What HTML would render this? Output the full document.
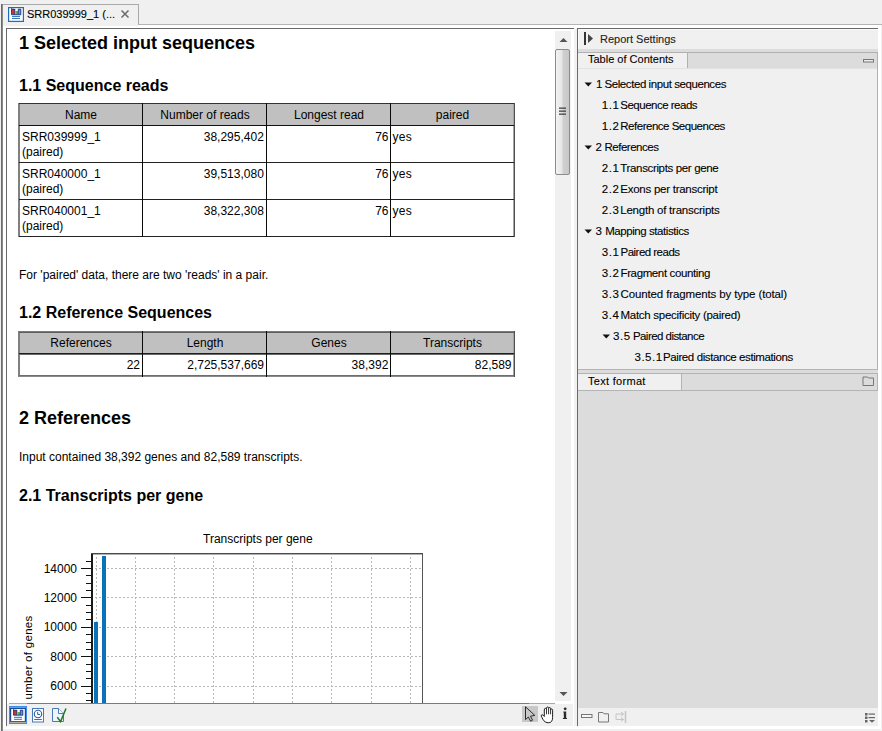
<!DOCTYPE html>
<html><head><meta charset="utf-8"><title>Report</title>
<style>
html,body{margin:0;padding:0;}
body{width:882px;height:731px;position:relative;overflow:hidden;background:#f0f0f0;font-family:"Liberation Sans",sans-serif;}
body>div{position:absolute;box-sizing:content-box;}
.t{white-space:nowrap;}
</style></head><body>
<div style="left:0px;top:0px;width:882px;height:731px;background:#f0f0f0;"></div>
<div style="left:3px;top:25px;width:878px;height:704px;background:#ffffff;"></div>
<div style="left:881px;top:25px;width:1px;height:704px;background:#f0f0f0;"></div>
<div style="left:138px;top:24px;width:744px;height:1px;background:#b4b4b4;"></div>
<div style="left:2px;top:4px;width:137px;height:1px;background:#a9a9a9;"></div>
<div style="left:138px;top:4px;width:1px;height:21px;background:#a9a9a9;"></div>
<div style="left:3px;top:5px;width:135px;height:21px;background:#f0f0f0;"></div>
<div style="left:1px;top:4px;width:1px;height:727px;background:#6b6b6b;"></div>
<div style="left:2px;top:4px;width:1px;height:727px;background:#8a8a8a;"></div>
<svg style="position:absolute;left:8px;top:7px;" width="16" height="15" viewBox="0 0 16 15">
<rect x="0.6" y="0.6" width="14.8" height="13.8" fill="#fff" stroke="#1f6db8" stroke-width="1.2"/>
<rect x="4" y="2" width="2.8" height="5.5" fill="#c8342e"/>
<rect x="7.6" y="4" width="2.4" height="3.5" fill="#52b84a"/>
<rect x="10.4" y="2" width="2.4" height="5.5" fill="#5a9ae0"/>
<path d="M3.5 1.2 L3.5 7.7 L13.2 7.7 M4 2.2 L6.8 2.2 M10.4 2.2 L12.8 2.2 L12.8 7.5 M6.8 2 L6.8 7.5 M10.3 2 L10.3 7.5" stroke="#1b2f7a" stroke-width="0.9" fill="none"/>
<rect x="4" y="8.9" width="8" height="1" fill="#2a6fc0"/>
<rect x="4" y="10.9" width="8" height="1" fill="#2a6fc0"/>
</svg>
<div class="t" style="left:27px;top:8.69px;font-size:11px;line-height:11px;color:#000;-webkit-text-stroke:0.1px #000;">SRR039999_1 (...</div>
<svg style="position:absolute;left:120px;top:9px;" width="10" height="10" viewBox="0 0 10 10"><path d="M1.5 1.5 L8.5 8.5 M8.5 1.5 L1.5 8.5" stroke="#6a6a6a" stroke-width="1.5"/></svg>
<div style="left:6px;top:28px;width:568px;height:1px;background:#6a6a6a;"></div>
<div style="left:6px;top:28px;width:1px;height:698px;background:#6a6a6a;"></div>
<div style="left:7px;top:29px;width:567px;height:697px;background:#ffffff;"></div>
<div class="t" style="left:19px;top:33.76px;font-size:18px;line-height:18px;font-weight:bold;color:#000;">1 Selected input sequences</div>
<div class="t" style="left:19px;top:77.96px;font-size:16px;line-height:16px;font-weight:bold;color:#000;">1.1 Sequence reads</div>
<div style="left:18px;top:104px;width:496px;height:21px;background:#c0c0c0;"></div>
<div style="left:19px;top:103px;width:1px;height:134px;background:#808080;"></div>
<div style="left:513px;top:104px;width:1px;height:132px;background:#a4a4a4;"></div>
<div style="left:18px;top:103px;width:497px;height:1px;background:#333;"></div>
<div style="left:18px;top:125px;width:497px;height:1px;background:#111;"></div>
<div style="left:18px;top:162px;width:497px;height:1px;background:#222;"></div>
<div style="left:18px;top:199px;width:497px;height:1px;background:#222;"></div>
<div style="left:18px;top:236px;width:497px;height:1px;background:#222;"></div>
<div style="left:18px;top:103px;width:1px;height:134px;background:#808080;"></div>
<div style="left:514px;top:103px;width:1px;height:134px;background:#505050;"></div>
<div style="left:142px;top:103px;width:1px;height:134px;background:#0a0a0a;"></div>
<div style="left:266px;top:103px;width:1px;height:134px;background:#0a0a0a;"></div>
<div style="left:390px;top:103px;width:1px;height:134px;background:#0a0a0a;"></div>
<div class="t" style="left:-119px;width:400px;text-align:center;top:108.84px;font-size:12px;line-height:12px;color:#000;">Name</div>
<div class="t" style="left:5px;width:400px;text-align:center;top:108.84px;font-size:12px;line-height:12px;color:#000;">Number of reads</div>
<div class="t" style="left:129px;width:400px;text-align:center;top:108.84px;font-size:12px;line-height:12px;color:#000;">Longest read</div>
<div class="t" style="left:252.5px;width:400px;text-align:center;top:108.84px;font-size:12px;line-height:12px;color:#000;">paired</div>
<div class="t" style="left:22px;top:130.84px;font-size:12px;line-height:12px;color:#000;">SRR039999_1</div>
<div class="t" style="left:22px;top:145.84px;font-size:12px;line-height:12px;color:#000;">(paired)</div>
<div class="t" style="right:618.2px;top:130.84px;font-size:12px;line-height:12px;color:#000;">38,295,402</div>
<div class="t" style="right:493.5px;top:130.84px;font-size:12px;line-height:12px;color:#000;">76</div>
<div class="t" style="left:392.5px;top:130.84px;font-size:12px;line-height:12px;color:#000;letter-spacing:0.3px;">yes</div>
<div class="t" style="left:22px;top:167.84px;font-size:12px;line-height:12px;color:#000;">SRR040000_1</div>
<div class="t" style="left:22px;top:182.84px;font-size:12px;line-height:12px;color:#000;">(paired)</div>
<div class="t" style="right:618.2px;top:167.84px;font-size:12px;line-height:12px;color:#000;">39,513,080</div>
<div class="t" style="right:493.5px;top:167.84px;font-size:12px;line-height:12px;color:#000;">76</div>
<div class="t" style="left:392.5px;top:167.84px;font-size:12px;line-height:12px;color:#000;letter-spacing:0.3px;">yes</div>
<div class="t" style="left:22px;top:204.84px;font-size:12px;line-height:12px;color:#000;">SRR040001_1</div>
<div class="t" style="left:22px;top:219.84px;font-size:12px;line-height:12px;color:#000;">(paired)</div>
<div class="t" style="right:618.2px;top:204.84px;font-size:12px;line-height:12px;color:#000;">38,322,308</div>
<div class="t" style="right:493.5px;top:204.84px;font-size:12px;line-height:12px;color:#000;">76</div>
<div class="t" style="left:392.5px;top:204.84px;font-size:12px;line-height:12px;color:#000;letter-spacing:0.3px;">yes</div>
<div class="t" style="left:19px;top:268.64px;font-size:12px;line-height:12px;color:#000;">For 'paired' data, there are two 'reads' in a pair.</div>
<div class="t" style="left:19px;top:304.96px;font-size:16px;line-height:16px;font-weight:bold;color:#000;">1.2 Reference Sequences</div>
<div style="left:18px;top:332px;width:496px;height:21px;background:#c0c0c0;"></div>
<div style="left:19px;top:331px;width:1px;height:46px;background:#808080;"></div>
<div style="left:513px;top:332px;width:1px;height:44px;background:#a4a4a4;"></div>
<div style="left:18px;top:331px;width:497px;height:1px;background:#7a7a7a;"></div>
<div style="left:18px;top:332px;width:497px;height:1px;background:#5e5e5e;"></div>
<div style="left:18px;top:353px;width:497px;height:1px;background:#1e1e1e;"></div>
<div style="left:18px;top:354px;width:497px;height:1px;background:#6a6a6a;"></div>
<div style="left:18px;top:375px;width:497px;height:1px;background:#6e6e6e;"></div>
<div style="left:18px;top:376px;width:497px;height:1px;background:#8a8a8a;"></div>
<div style="left:18px;top:331px;width:1px;height:46px;background:#808080;"></div>
<div style="left:514px;top:331px;width:1px;height:46px;background:#505050;"></div>
<div style="left:142px;top:331px;width:1px;height:46px;background:#0a0a0a;"></div>
<div style="left:266px;top:331px;width:1px;height:46px;background:#0a0a0a;"></div>
<div style="left:390px;top:331px;width:1px;height:46px;background:#0a0a0a;"></div>
<div class="t" style="left:-119px;width:400px;text-align:center;top:336.84px;font-size:12px;line-height:12px;color:#000;">References</div>
<div class="t" style="left:5px;width:400px;text-align:center;top:336.84px;font-size:12px;line-height:12px;color:#000;">Length</div>
<div class="t" style="left:129px;width:400px;text-align:center;top:336.84px;font-size:12px;line-height:12px;color:#000;">Genes</div>
<div class="t" style="left:252.5px;width:400px;text-align:center;top:336.84px;font-size:12px;line-height:12px;color:#000;">Transcripts</div>
<div class="t" style="right:742px;top:358.84px;font-size:12px;line-height:12px;color:#000;">22</div>
<div class="t" style="right:618px;top:358.84px;font-size:12px;line-height:12px;color:#000;">2,725,537,669</div>
<div class="t" style="right:493.7px;top:358.84px;font-size:12px;line-height:12px;color:#000;">38,392</div>
<div class="t" style="right:370.5px;top:358.84px;font-size:12px;line-height:12px;color:#000;">82,589</div>
<div class="t" style="left:19px;top:408.76px;font-size:18px;line-height:18px;font-weight:bold;color:#000;">2 References</div>
<div class="t" style="left:19px;top:450.84px;font-size:12px;line-height:12px;color:#000;">Input contained 38,392 genes and 82,589 transcripts.</div>
<div class="t" style="left:19px;top:487.96px;font-size:16px;line-height:16px;font-weight:bold;color:#000;">2.1 Transcripts per gene</div>
<div class="t" style="left:203px;top:532.84px;font-size:12px;line-height:12px;color:#000;">Transcripts per gene</div>
<svg style="position:absolute;left:0;top:0" width="882" height="731" viewBox="0 0 882 731"><defs><clipPath id="cc"><rect x="7" y="29" width="548" height="674"/></clipPath></defs><g clip-path="url(#cc)" shape-rendering="crispEdges"><line x1="96.5" y1="555" x2="96.5" y2="703" stroke="#b8b8b8" stroke-width="1" stroke-dasharray="2,2" stroke-dashoffset="2"/><line x1="135.5" y1="555" x2="135.5" y2="703" stroke="#b8b8b8" stroke-width="1" stroke-dasharray="2,2" stroke-dashoffset="2"/><line x1="174.5" y1="555" x2="174.5" y2="703" stroke="#b8b8b8" stroke-width="1" stroke-dasharray="2,2" stroke-dashoffset="2"/><line x1="213.5" y1="555" x2="213.5" y2="703" stroke="#b8b8b8" stroke-width="1" stroke-dasharray="2,2" stroke-dashoffset="2"/><line x1="253.5" y1="555" x2="253.5" y2="703" stroke="#b8b8b8" stroke-width="1" stroke-dasharray="2,2" stroke-dashoffset="2"/><line x1="292.5" y1="555" x2="292.5" y2="703" stroke="#b8b8b8" stroke-width="1" stroke-dasharray="2,2" stroke-dashoffset="2"/><line x1="331.5" y1="555" x2="331.5" y2="703" stroke="#b8b8b8" stroke-width="1" stroke-dasharray="2,2" stroke-dashoffset="2"/><line x1="371.5" y1="555" x2="371.5" y2="703" stroke="#b8b8b8" stroke-width="1" stroke-dasharray="2,2" stroke-dashoffset="2"/><line x1="410.5" y1="555" x2="410.5" y2="703" stroke="#b8b8b8" stroke-width="1" stroke-dasharray="2,2" stroke-dashoffset="2"/><line x1="93" y1="568.5" x2="422" y2="568.5" stroke="#b8b8b8" stroke-width="1" stroke-dasharray="2,2" stroke-dashoffset="2"/><line x1="93" y1="597.5" x2="422" y2="597.5" stroke="#b8b8b8" stroke-width="1" stroke-dasharray="2,2" stroke-dashoffset="2"/><line x1="93" y1="627.5" x2="422" y2="627.5" stroke="#b8b8b8" stroke-width="1" stroke-dasharray="2,2" stroke-dashoffset="2"/><line x1="93" y1="656.5" x2="422" y2="656.5" stroke="#b8b8b8" stroke-width="1" stroke-dasharray="2,2" stroke-dashoffset="2"/><line x1="93" y1="686.5" x2="422" y2="686.5" stroke="#b8b8b8" stroke-width="1" stroke-dasharray="2,2" stroke-dashoffset="2"/><line x1="86" y1="561.5" x2="92" y2="561.5" stroke="#111" stroke-width="1"/><line x1="81" y1="568.5" x2="92" y2="568.5" stroke="#111" stroke-width="1"/><line x1="86" y1="575.5" x2="92" y2="575.5" stroke="#111" stroke-width="1"/><line x1="86" y1="583.5" x2="92" y2="583.5" stroke="#111" stroke-width="1"/><line x1="86" y1="590.5" x2="92" y2="590.5" stroke="#111" stroke-width="1"/><line x1="81" y1="597.5" x2="92" y2="597.5" stroke="#111" stroke-width="1"/><line x1="86" y1="605.5" x2="92" y2="605.5" stroke="#111" stroke-width="1"/><line x1="86" y1="612.5" x2="92" y2="612.5" stroke="#111" stroke-width="1"/><line x1="86" y1="619.5" x2="92" y2="619.5" stroke="#111" stroke-width="1"/><line x1="81" y1="627.5" x2="92" y2="627.5" stroke="#111" stroke-width="1"/><line x1="86" y1="634.5" x2="92" y2="634.5" stroke="#111" stroke-width="1"/><line x1="86" y1="642.5" x2="92" y2="642.5" stroke="#111" stroke-width="1"/><line x1="86" y1="649.5" x2="92" y2="649.5" stroke="#111" stroke-width="1"/><line x1="81" y1="656.5" x2="92" y2="656.5" stroke="#111" stroke-width="1"/><line x1="86" y1="664.5" x2="92" y2="664.5" stroke="#111" stroke-width="1"/><line x1="86" y1="671.5" x2="92" y2="671.5" stroke="#111" stroke-width="1"/><line x1="86" y1="678.5" x2="92" y2="678.5" stroke="#111" stroke-width="1"/><line x1="81" y1="686.5" x2="92" y2="686.5" stroke="#111" stroke-width="1"/><line x1="86" y1="693.5" x2="92" y2="693.5" stroke="#111" stroke-width="1"/><line x1="86" y1="700.5" x2="92" y2="700.5" stroke="#111" stroke-width="1"/><rect x="94" y="622" width="4" height="90" fill="#0a72b8"/><rect x="102" y="556" width="4" height="160" fill="#0a72b8"/><rect x="91" y="553" width="2" height="160" fill="#1a1a1a"/><rect x="91" y="553" width="332" height="1" fill="#4a4a4a"/><rect x="93" y="554" width="329" height="1" fill="#b0b0b0"/><rect x="422" y="553" width="1" height="160" fill="#555"/></g></svg>
<div class="t" style="right:805px;top:563.34px;font-size:12px;line-height:12px;color:#000;">14000</div>
<div class="t" style="right:805px;top:591.74px;font-size:12px;line-height:12px;color:#000;">12000</div>
<div class="t" style="right:805px;top:621.14px;font-size:12px;line-height:12px;color:#000;">10000</div>
<div class="t" style="right:805px;top:650.54px;font-size:12px;line-height:12px;color:#000;">8000</div>
<div class="t" style="right:805px;top:679.94px;font-size:12px;line-height:12px;color:#000;">6000</div>
<svg style="position:absolute;left:0;top:0" width="60" height="731" viewBox="0 0 60 731"><text transform="translate(32.2,699.5) rotate(-90)" font-family="Liberation Sans" font-size="11.5" letter-spacing="0.3" fill="#000">umber of genes</text></svg>
<div style="left:555px;top:31px;width:16px;height:670px;background:#f0f0f0;"></div>
<svg style="position:absolute;left:559px;top:37px;" width="9" height="6" viewBox="0 0 9 6"><path d="M0.5 5 L4.5 1 L8.5 5 Z" fill="#555"/></svg>
<div style="left:555px;top:49px;width:13px;height:124px;border:1px solid #8c8c8c;border-radius:2px;background:linear-gradient(to right,#f3f3f3 0%,#e6e6e6 45%,#cfcfcf 55%,#c8c8c8 100%);"></div>
<svg style="position:absolute;left:559px;top:107px;" width="8" height="9" viewBox="0 0 8 9"><rect x="0" y="0.5" width="7" height="1.3" fill="#444"/><rect x="0" y="3.5" width="7" height="1.3" fill="#444"/><rect x="0" y="6.5" width="7" height="1.3" fill="#444"/></svg>
<svg style="position:absolute;left:559px;top:691px;" width="9" height="6" viewBox="0 0 9 6"><path d="M0.5 1 L8.5 1 L4.5 5 Z" fill="#555"/></svg>
<div style="left:9px;top:703px;width:546px;height:1px;background:#a8a8a8;"></div>
<div style="left:27px;top:703px;width:502px;height:1px;background:#7a7a7a;"></div>
<div style="left:7px;top:704px;width:566px;height:22px;background:#f0f0f0;"></div>
<div style="left:9px;top:706px;width:16px;height:16px;border:1px solid #3d8ee8;background:#d6e8fb;"></div>
<svg style="position:absolute;left:10px;top:707px;" width="16" height="16" viewBox="0 0 16 16">
<rect x="0" y="0" width="16" height="1.2" fill="#b4ac98"/>
<rect x="0.6" y="1.4" width="14.8" height="13.2" fill="#fff" stroke="#1c4a96" stroke-width="1.2"/>
<rect x="4" y="3" width="2.8" height="5" fill="#c8342e"/>
<rect x="7.6" y="5" width="2.4" height="3" fill="#52b84a"/>
<rect x="10.4" y="3" width="2.4" height="5" fill="#5a9ae0"/>
<path d="M3.5 2.2 L3.5 8.2 L13.2 8.2 M4 3.2 L6.8 3.2 M10.4 3.2 L12.8 3.2 L12.8 8 M6.8 3 L6.8 8 M10.3 3 L10.3 8" stroke="#1b2f7a" stroke-width="0.9" fill="none"/>
<rect x="4" y="9.8" width="8" height="1" fill="#2a6fc0"/>
<rect x="4" y="11.8" width="8" height="1" fill="#2a6fc0"/>
<rect x="0" y="14.8" width="16" height="1.2" fill="#b4ac98"/>
</svg>
<svg style="position:absolute;left:32px;top:708px;" width="13" height="15" viewBox="0 0 13 15">
<rect x="0.5" y="0.5" width="11" height="13.5" fill="#fbfdff" stroke="#4a7ab5" stroke-width="1"/>
<circle cx="6" cy="6" r="3.7" fill="none" stroke="#2f5f99" stroke-width="1.1"/>
<path d="M5.7 3.9 L5.7 6.5 L8.1 6.5" stroke="#2f5f99" stroke-width="1" fill="none"/>
<rect x="2.2" y="11" width="7.6" height="1" fill="#3a6fb0"/>
</svg>
<svg style="position:absolute;left:52px;top:708px;" width="15" height="15" viewBox="0 0 15 15">
<path d="M0.5 0.5 L6.5 0.5 L11.5 5.5 L11.5 13.5 L0.5 13.5 Z" fill="#eef4fb" stroke="#4a7ab5" stroke-width="1"/>
<path d="M6.5 0.5 L6.5 5.5 L11.5 5.5" fill="#fff" stroke="#4a7ab5" stroke-width="1"/>
<path d="M5.3 9.2 L8.6 13.6 L14 0.5" stroke="#1e7a2a" stroke-width="1.5" fill="none"/>
</svg>
<div style="left:522px;top:706px;width:16px;height:16px;background:#c8c8c8;"></div>
<svg style="position:absolute;left:522px;top:706px;" width="16" height="16" viewBox="0 0 16 16"><path d="M3.5 0.8 L3.5 13.6 L6.4 11 L8.6 15.2 L10.6 14.2 L8.5 10.2 L12.8 9.4 Z" fill="#c8c8c8" stroke="#2a2a2a" stroke-width="1" stroke-linejoin="miter"/></svg>
<svg style="position:absolute;left:540px;top:705.5px;" width="15" height="18" viewBox="0 0 15 18"><path d="M4.3 10.5 L4.3 4 Q4.3 2.3 5.4 2.3 Q6.5 2.3 6.5 3.6 L6.5 2.2 Q6.5 1 7.6 1 Q8.6 1 8.6 2.2 L8.6 2.5 Q8.7 1.5 9.6 1.5 Q10.6 1.5 10.6 2.6 L10.6 3.8 Q10.8 3 11.6 3 Q12.6 3 12.6 4.2 L12.6 11.5 Q12.6 16.8 8.2 16.8 Q4.8 16.8 3.2 13.8 L1.3 10.2 Q0.9 8.8 2.2 8.8 Q3.3 8.8 4.3 10.5 Z" fill="#fff" stroke="#1e1e1e" stroke-width="1"/><path d="M6.5 3.5 L6.5 8.3 M8.6 2.4 L8.6 8.3 M10.6 3.6 L10.6 8.3" stroke="#1e1e1e" stroke-width="0.9" fill="none"/></svg>
<svg style="position:absolute;left:561px;top:707px;" width="8" height="13" viewBox="0 0 8 13"><circle cx="4.2" cy="1.8" r="1.4" fill="#2a2a2a"/><path d="M2.4 4.6 L5.2 4.6 L5.2 10.9 L6.0 11.1 L6.0 12 L1.9 12 L1.9 11.1 L2.8 10.9 L2.8 5.6 L2.2 5.5 Z" fill="#2a2a2a"/></svg>
<div style="left:574px;top:28px;width:3px;height:698px;background:#f2f2f2;"></div>
<div style="left:577px;top:28px;width:301px;height:1px;background:#6a6a6a;"></div>
<div style="left:577px;top:28px;width:1px;height:698px;background:#6a6a6a;"></div>
<div style="left:578px;top:29px;width:300px;height:20px;background:#f0f0f0;"></div>
<div style="left:578px;top:29px;width:300px;height:1px;background:#fafafa;"></div>
<div style="left:578px;top:29px;width:1px;height:20px;background:#fafafa;"></div>
<svg style="position:absolute;left:583px;top:31px;" width="12" height="15" viewBox="0 0 12 15"><rect x="1" y="1" width="2" height="13" fill="#333"/><path d="M5 3 L10 7.5 L5 12 Z" fill="#444"/></svg>
<div class="t" style="left:600px;top:33.69px;font-size:11px;line-height:11px;color:#222;-webkit-text-stroke:0.1px #222;">Report Settings</div>
<div style="left:578px;top:49px;width:300px;height:3px;background:#dcdcdc;"></div>
<div style="left:578px;top:52px;width:300px;height:1px;background:#b0b0b0;"></div>
<div style="left:578px;top:53px;width:299px;height:15px;background:#dcdcdc;"></div>
<div style="left:578px;top:53px;width:109px;height:15px;background:#f0f0f0;"></div>
<div style="left:687px;top:53px;width:1px;height:15px;background:#b0b0b0;"></div>
<div style="left:578px;top:68px;width:299px;height:1px;background:#e2e2e2;"></div>
<div style="left:578px;top:69px;width:299px;height:300px;background:#f0f0f0;"></div>
<div style="left:877px;top:52px;width:1px;height:318px;background:#b0b0b0;"></div>
<div style="left:578px;top:369px;width:300px;height:1px;background:#b4b4b4;"></div>
<div class="t" style="left:588px;top:53.69px;font-size:11px;line-height:11px;color:#000;-webkit-text-stroke:0.1px #000;">Table of Contents</div>
<svg style="position:absolute;left:862px;top:58px;" width="13" height="5" viewBox="0 0 13 5"><rect x="1.5" y="1.5" width="10" height="2.5" fill="#ececec" stroke="#777" stroke-width="1"/></svg>
<svg style="position:absolute;left:584px;top:82px;" width="9" height="5" viewBox="0 0 9 5"><path d="M0.5 0.5 L8 0.5 L4.25 4.5 Z" fill="#111"/></svg>
<div class="t" style="left:596.1px;top:78.77px;font-size:11.5px;line-height:11.5px;color:#000;letter-spacing:0.5px;-webkit-text-stroke:0.1px #000;">1</div>
<div class="t" style="left:604.5px;top:78.77px;font-size:11.5px;line-height:11.5px;color:#000;letter-spacing:-0.426px;-webkit-text-stroke:0.1px #000;">Selected input sequences</div>
<div class="t" style="left:601.8000000000001px;top:99.77px;font-size:11.5px;line-height:11.5px;color:#000;letter-spacing:0.5px;-webkit-text-stroke:0.1px #000;">1.1</div>
<div class="t" style="left:620.3px;top:99.77px;font-size:11.5px;line-height:11.5px;color:#000;letter-spacing:-0.500px;-webkit-text-stroke:0.1px #000;">Sequence reads</div>
<div class="t" style="left:601.8000000000001px;top:120.77px;font-size:11.5px;line-height:11.5px;color:#000;letter-spacing:0.5px;-webkit-text-stroke:0.1px #000;">1.2</div>
<div class="t" style="left:620.3px;top:120.77px;font-size:11.5px;line-height:11.5px;color:#000;letter-spacing:-0.489px;-webkit-text-stroke:0.1px #000;">Reference Sequences</div>
<svg style="position:absolute;left:584px;top:145px;" width="9" height="5" viewBox="0 0 9 5"><path d="M0.5 0.5 L8 0.5 L4.25 4.5 Z" fill="#111"/></svg>
<div class="t" style="left:595.6px;top:141.77px;font-size:11.5px;line-height:11.5px;color:#000;letter-spacing:0.5px;-webkit-text-stroke:0.1px #000;">2</div>
<div class="t" style="left:604.5px;top:141.77px;font-size:11.5px;line-height:11.5px;color:#000;letter-spacing:-0.489px;-webkit-text-stroke:0.1px #000;">References</div>
<div class="t" style="left:601.8000000000001px;top:162.77px;font-size:11.5px;line-height:11.5px;color:#000;letter-spacing:0.5px;-webkit-text-stroke:0.1px #000;">2.1</div>
<div class="t" style="left:620.3px;top:162.77px;font-size:11.5px;line-height:11.5px;color:#000;letter-spacing:-0.347px;-webkit-text-stroke:0.1px #000;">Transcripts per gene</div>
<div class="t" style="left:601.8000000000001px;top:183.77px;font-size:11.5px;line-height:11.5px;color:#000;letter-spacing:0.5px;-webkit-text-stroke:0.1px #000;">2.2</div>
<div class="t" style="left:620.3px;top:183.77px;font-size:11.5px;line-height:11.5px;color:#000;letter-spacing:-0.258px;-webkit-text-stroke:0.1px #000;">Exons per transcript</div>
<div class="t" style="left:601.8000000000001px;top:204.77px;font-size:11.5px;line-height:11.5px;color:#000;letter-spacing:0.5px;-webkit-text-stroke:0.1px #000;">2.3</div>
<div class="t" style="left:620.3px;top:204.77px;font-size:11.5px;line-height:11.5px;color:#000;letter-spacing:-0.235px;-webkit-text-stroke:0.1px #000;">Length of transcripts</div>
<svg style="position:absolute;left:584px;top:229px;" width="9" height="5" viewBox="0 0 9 5"><path d="M0.5 0.5 L8 0.5 L4.25 4.5 Z" fill="#111"/></svg>
<div class="t" style="left:595.6px;top:225.77px;font-size:11.5px;line-height:11.5px;color:#000;letter-spacing:0.5px;-webkit-text-stroke:0.1px #000;">3</div>
<div class="t" style="left:605.2px;top:225.77px;font-size:11.5px;line-height:11.5px;color:#000;letter-spacing:-0.435px;-webkit-text-stroke:0.1px #000;">Mapping statistics</div>
<div class="t" style="left:601.8000000000001px;top:246.77px;font-size:11.5px;line-height:11.5px;color:#000;letter-spacing:0.5px;-webkit-text-stroke:0.1px #000;">3.1</div>
<div class="t" style="left:620.5px;top:246.77px;font-size:11.5px;line-height:11.5px;color:#000;letter-spacing:-0.518px;-webkit-text-stroke:0.1px #000;">Paired reads</div>
<div class="t" style="left:601.8000000000001px;top:267.77px;font-size:11.5px;line-height:11.5px;color:#000;letter-spacing:0.5px;-webkit-text-stroke:0.1px #000;">3.2</div>
<div class="t" style="left:620.5px;top:267.77px;font-size:11.5px;line-height:11.5px;color:#000;letter-spacing:-0.375px;-webkit-text-stroke:0.1px #000;">Fragment counting</div>
<div class="t" style="left:601.8000000000001px;top:288.77px;font-size:11.5px;line-height:11.5px;color:#000;letter-spacing:0.5px;-webkit-text-stroke:0.1px #000;">3.3</div>
<div class="t" style="left:620.5px;top:288.77px;font-size:11.5px;line-height:11.5px;color:#000;letter-spacing:-0.128px;-webkit-text-stroke:0.1px #000;">Counted fragments by type (total)</div>
<div class="t" style="left:601.8000000000001px;top:309.77px;font-size:11.5px;line-height:11.5px;color:#000;letter-spacing:0.5px;-webkit-text-stroke:0.1px #000;">3.4</div>
<div class="t" style="left:620.5px;top:309.77px;font-size:11.5px;line-height:11.5px;color:#000;letter-spacing:-0.284px;-webkit-text-stroke:0.1px #000;">Match specificity (paired)</div>
<svg style="position:absolute;left:601.5px;top:334px;" width="9" height="5" viewBox="0 0 9 5"><path d="M0.5 0.5 L8 0.5 L4.25 4.5 Z" fill="#111"/></svg>
<div class="t" style="left:613.1px;top:330.77px;font-size:11.5px;line-height:11.5px;color:#000;letter-spacing:0.5px;-webkit-text-stroke:0.1px #000;">3.5</div>
<div class="t" style="left:632.9px;top:330.77px;font-size:11.5px;line-height:11.5px;color:#000;letter-spacing:-0.543px;-webkit-text-stroke:0.1px #000;">Paired distance</div>
<div class="t" style="left:634.5px;top:351.77px;font-size:11.5px;line-height:11.5px;color:#000;letter-spacing:0.5px;-webkit-text-stroke:0.1px #000;">3.5.1</div>
<div class="t" style="left:663px;top:351.77px;font-size:11.5px;line-height:11.5px;color:#000;letter-spacing:-0.400px;-webkit-text-stroke:0.1px #000;">Paired distance estimations</div>
<div style="left:578px;top:370px;width:300px;height:3px;background:#dcdcdc;"></div>
<div style="left:578px;top:373px;width:300px;height:1px;background:#b4b4b4;"></div>
<div style="left:578px;top:374px;width:299px;height:16px;background:#dcdcdc;"></div>
<div style="left:578px;top:374px;width:103px;height:16px;background:#f0f0f0;"></div>
<div style="left:681px;top:374px;width:1px;height:16px;background:#b4b4b4;"></div>
<div style="left:877px;top:373px;width:1px;height:18px;background:#b4b4b4;"></div>
<div style="left:578px;top:390px;width:300px;height:1px;background:#b4b4b4;"></div>
<div class="t" style="left:588px;top:375.69px;font-size:11px;line-height:11px;color:#000;letter-spacing:0.3px;-webkit-text-stroke:0.1px #000;">Text format</div>
<svg style="position:absolute;left:862px;top:376px;" width="13" height="11" viewBox="0 0 13 11"><path d="M1 1 L5.5 1 L6.5 2 L11.5 2 L11.5 9.5 L1 9.5 Z" fill="#dcdcdc" stroke="#777" stroke-width="1"/></svg>
<div style="left:578px;top:391px;width:300px;height:317px;background:#dcdcdc;"></div>
<div style="left:578px;top:708px;width:300px;height:18px;background:#f0f0f0;"></div>
<svg style="position:absolute;left:580px;top:713px;" width="14" height="6" viewBox="0 0 14 6"><rect x="1.5" y="1.5" width="10.5" height="3" fill="#f6f6f6" stroke="#777" stroke-width="1"/></svg>
<svg style="position:absolute;left:597px;top:711px;" width="14" height="13" viewBox="0 0 14 13"><path d="M1.5 1.5 L6 1.5 L7 2.8 L11.5 2.8 L11.5 11 L1.5 11 Z" fill="#f0f0f0" stroke="#777" stroke-width="1"/></svg>
<svg style="position:absolute;left:615px;top:710px;" width="13" height="14" viewBox="0 0 13 14"><path d="M10.5 1 L10.5 13" stroke="#c4c4c4" stroke-width="1.5"/><path d="M1 4 L8.5 4 M6 2 L8.5 4 L6 6 M1 4 L1 9.5 L8.5 9.5 M6 7.5 L8.5 9.5 L6 11.5" stroke="#c4c4c4" stroke-width="1" fill="none"/></svg>
<svg style="position:absolute;left:864px;top:712px;" width="12" height="11" viewBox="0 0 12 11"><rect x="1" y="1" width="2.5" height="2.5" fill="#666"/><rect x="1" y="4.5" width="2.5" height="2.5" fill="#666"/><rect x="1" y="8" width="2.5" height="2.5" fill="#666"/><rect x="4.5" y="1.5" width="6.5" height="1.2" fill="#666"/><rect x="4.5" y="5" width="6.5" height="1.2" fill="#666"/><path d="M5 8 L11 8 L8 10.8 Z" fill="#666"/></svg>
</body></html>
